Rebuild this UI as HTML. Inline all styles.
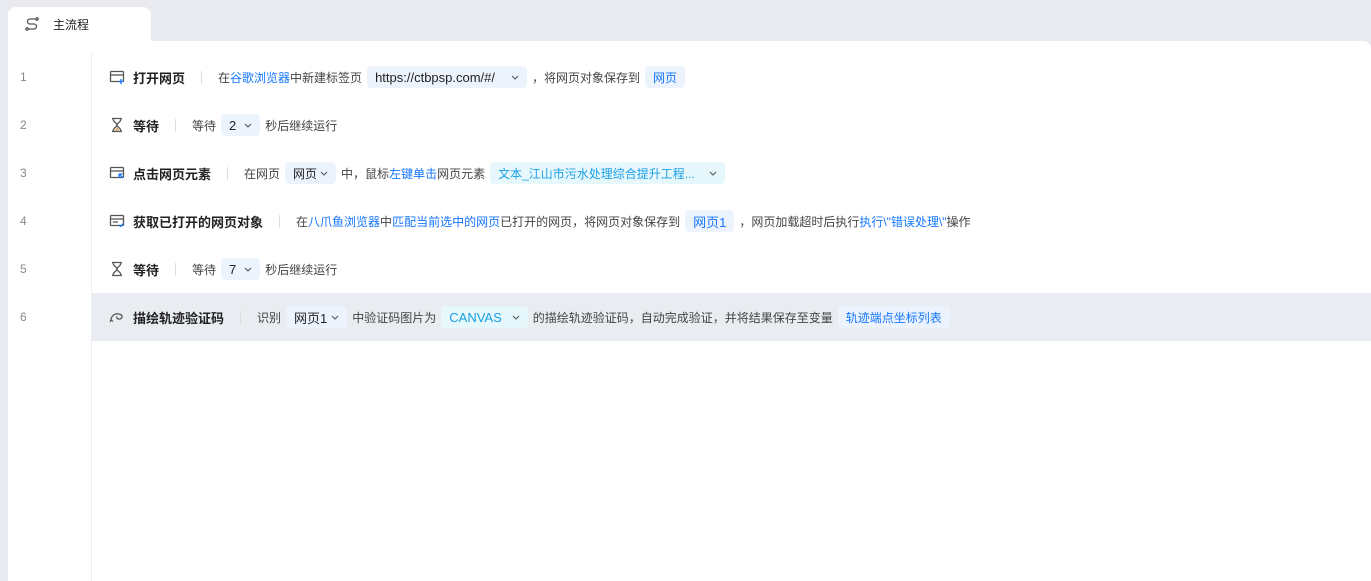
<!DOCTYPE html>
<html><head><meta charset="utf-8"><style>
*{margin:0;padding:0;box-sizing:border-box}
body{width:1371px;height:581px;background:#e9ebf0;font-family:"Liberation Sans","Noto Sans CJK SC",sans-serif;font-size:12px;color:#444;position:relative;overflow:hidden}
.tab{position:absolute;left:8px;top:7px;width:143px;height:40px;background:#fff;border-radius:8px 8px 0 0}
.tab span{position:absolute;left:45px;top:9px;font-size:12px;color:#222}
.tab svg{position:absolute;left:17px;top:10px}
.panel{position:absolute;left:8px;top:41px;right:0;bottom:0;background:#fff;border-radius:0 8px 0 0}
.gut{position:absolute;left:91px;top:52px;bottom:0;border-left:1px solid #eceef2}
.num{position:absolute;left:20px;color:#888;font-size:12px}
.row{position:absolute;left:92px;right:0;height:48px;display:flex;align-items:center;padding-left:17px;white-space:nowrap}
.row.sel{background:#e9ecf1}
.ic{width:16px;height:16px;margin-right:8px}
.t{font-weight:bold;color:#222;font-size:13px}
.sep{width:1px;height:13px;background:#ddd;margin:0 16px}
.b{color:#1677ff}
.p{display:inline-flex;align-items:center;height:22px;background:#edf3fd;border-radius:4px;padding:0 8px;margin:0 5px;color:#222;font-size:12px}
.p.bl{color:#1677ff}
.p.cy{background:#e7f8fd;color:#1a9fe6}
.l{font-size:13px}
.ch{width:8px;height:5px;margin-left:8px}
</style></head><body>
<div class="tab"><svg width="14" height="14" viewBox="0 0 14 14" fill="none" stroke="#555" stroke-width="1.3"><path d="M11 2H5a2.5 2.5 0 0 0 0 5h4a2.5 2.5 0 0 1 0 5H3"/><circle cx="12" cy="2" r="1.2"/><circle cx="2" cy="12" r="1.2"/></svg><span>主流程</span></div>
<div class="panel"></div>
<div class="gut"></div>
<div class="num" style="top:70px">1</div>
<div class="num" style="top:118px">2</div>
<div class="num" style="top:166px">3</div>
<div class="num" style="top:214px">4</div>
<div class="num" style="top:262px">5</div>
<div class="num" style="top:310px">6</div>

<div class="row" style="top:53px"><svg class="ic" viewBox="0 0 16 16" fill="none" stroke="#555" stroke-width="1.3"><rect x="1.5" y="2.5" width="13" height="10" rx="1"/><path d="M1.5 6h13"/><path d="M12 10v5M9.5 12.5h5" stroke="#1677ff"/></svg><span class="t">打开网页</span><span class="sep"></span>在<span class="b">谷歌浏览器</span>中新建标签页<span class="p l">https://ctbpsp.com/#/<svg class="ch" style="margin-left:16px" viewBox="0 0 8 5" fill="none" stroke="#555" stroke-width="1.1"><path d="M1 1l3 3 3-3"/></svg></span>，将网页对象保存到<span class="p bl">网页</span></div>
<div class="row" style="top:101px"><svg class="ic" viewBox="0 0 16 16" fill="none" stroke="#555" stroke-width="1.3"><path d="M3 1.5h10M3 14.5h10M4 1.5c0 4 4 4 4 6.5s-4 2.5-4 6.5M12 1.5c0 4-4 4-4 6.5s4 2.5 4 6.5"/><path d="M5.5 13.5h5l-2.5-3z" fill="#e8a060" stroke="none"/></svg><span class="t">等待</span><span class="sep"></span>等待<span class="p l">2<svg class="ch" viewBox="0 0 8 5" fill="none" stroke="#555" stroke-width="1.1"><path d="M1 1l3 3 3-3"/></svg></span>秒后继续运行</div>
<div class="row" style="top:149px"><svg class="ic" viewBox="0 0 16 16" fill="none" stroke="#555" stroke-width="1.3"><rect x="1.5" y="2.5" width="13" height="10" rx="1"/><path d="M1.5 6h13"/><path d="M10 9l4 4M10 9v3.5M10 9h3.5" stroke="#1677ff"/></svg><span class="t">点击网页元素</span><span class="sep"></span>在网页<span class="p">网页<svg class="ch" style="margin-left:3px" viewBox="0 0 8 5" fill="none" stroke="#555" stroke-width="1.1"><path d="M1 1l3 3 3-3"/></svg></span>中，鼠标<span class="b">左键单击</span>网页元素<span class="p cy">文本_江山市污水处理综合提升工程...<svg class="ch" style="margin-left:14px" viewBox="0 0 8 5" fill="none" stroke="#555" stroke-width="1.1"><path d="M1 1l3 3 3-3"/></svg></span></div>
<div class="row" style="top:197px"><svg class="ic" viewBox="0 0 16 16" fill="none" stroke="#555" stroke-width="1.3"><rect x="1.5" y="2.5" width="13" height="10" rx="1"/><path d="M1.5 6h13M4 9h5"/><path d="M10 12l1.5 1.5 3-3" stroke="#1677ff"/></svg><span class="t">获取已打开的网页对象</span><span class="sep"></span>在<span class="b">八爪鱼浏览器</span>中<span class="b">匹配当前选中的网页</span>已打开的网页，将网页对象保存到<span class="p bl l">网页1</span>，网页加载超时后执行<span class="b">执行\"错误处理\"</span>操作</div>
<div class="row" style="top:245px"><svg class="ic" viewBox="0 0 16 16" fill="none" stroke="#555" stroke-width="1.3"><path d="M3 1.5h10M3 14.5h10M4 1.5c0 4 4 4 4 6.5s-4 2.5-4 6.5M12 1.5c0 4-4 4-4 6.5s4 2.5 4 6.5"/></svg><span class="t">等待</span><span class="sep"></span>等待<span class="p l">7<svg class="ch" viewBox="0 0 8 5" fill="none" stroke="#555" stroke-width="1.1"><path d="M1 1l3 3 3-3"/></svg></span>秒后继续运行</div>
<div class="row sel" style="top:293px"><svg class="ic" viewBox="0 0 16 16" fill="none" stroke="#555" stroke-width="1.3"><path d="M2 11c0-4 4-7 8-6 3 .5 4 3 2 4.5s-5 0-4-2M2 11l2 1.5M2 11l-1 2"/></svg><span class="t">描绘轨迹验证码</span><span class="sep"></span>识别<span class="p l">网页1<svg class="ch" style="margin-left:4px" viewBox="0 0 8 5" fill="none" stroke="#555" stroke-width="1.1"><path d="M1 1l3 3 3-3"/></svg></span>中验证码图片为<span class="p cy l">CANVAS<svg class="ch" style="margin-left:10px" viewBox="0 0 8 5" fill="none" stroke="#555" stroke-width="1.1"><path d="M1 1l3 3 3-3"/></svg></span>的描绘轨迹验证码，自动完成验证，并将结果保存至变量<span class="p bl">轨迹端点坐标列表</span></div>
</body></html>
